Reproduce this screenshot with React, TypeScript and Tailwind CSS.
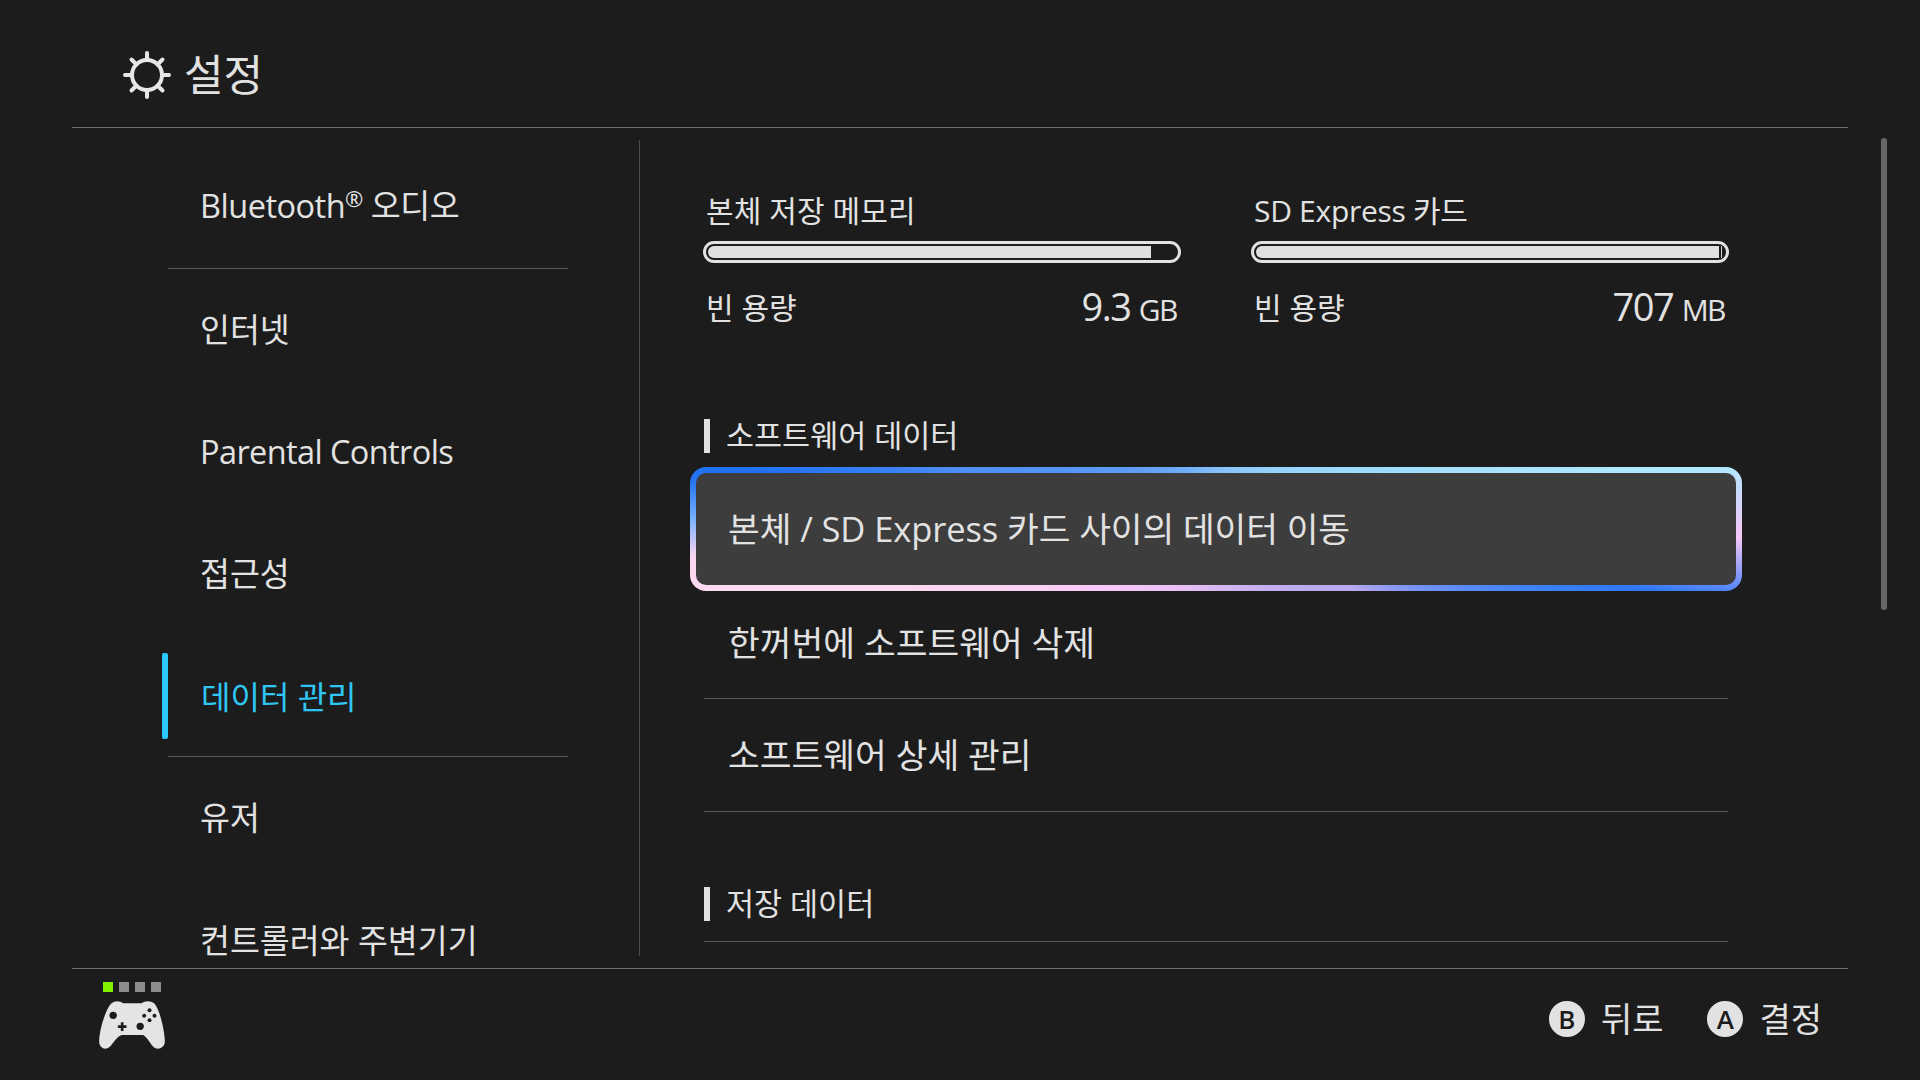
const MENU = [
    { label: "인터넷" },
    { label: "Parental Controls", tight: true },
    { label: "접근성" },
];

function GearIcon() {
    return (
        <svg width="50" height="50" viewBox="0 0 50 50" fill="none" stroke="#e6e6e6" strokeWidth="4" strokeLinecap="round">
            <circle cx="25" cy="25" r="15" />
            <path d="M25 3v7M25 40v7M3 25h7M40 25h7M9.5 9.5l5 5M35.5 35.5l5 5M9.5 40.5l5-5M35.5 14.5l5-5" />
        </svg>
    );
}

function GamepadIcon() {
    return (
        <svg width="66" height="48" viewBox="58 123 197 144">
            <path
                fill="#e4e4e4"
                d="M95 130C105 121 120 122 130 130L185 130C195 122 215 121 225 132C240 150 255 215 255 245C255 262 235 272 222 262C210 250 205 235 190 225L125 225C105 235 100 252 88 262C75 272 58 262 58 245C58 215 75 150 95 130Z"
            />
            <circle cx="100" cy="166" r="11" fill="#1c1c1c" />
            <circle cx="181" cy="199" r="11" fill="#1c1c1c" />
            <path d="M127 187v26M114 200h26" stroke="#1c1c1c" strokeWidth="8" />
            <circle cx="209" cy="151" r="6" fill="#1c1c1c" />
            <circle cx="224" cy="167" r="6" fill="#1c1c1c" />
            <circle cx="209" cy="181" r="6" fill="#1c1c1c" />
            <circle cx="193" cy="167" r="6" fill="#1c1c1c" />
        </svg>
    );
}

function StorageBar({ title, used, value, unit, sliver = false }: { title: string; used: number; value: string; unit: string; sliver?: boolean }) {
    return (
        <div className="w-[478px]">
            <div className={`h-[40px] pl-[3px] pt-[1px] text-[30px] leading-[40px] ${sliver ? "tracking-[-0.3px]" : "tracking-[0.1px]"}`}>{title}</div>
            <div className="mt-[11px] flex h-[22px] gap-[2px] rounded-full border-[3px] border-[#e2e2e2] p-[2px]">
                <div className="h-full rounded-l-full bg-[#e0e0e0]" style={{ width: `${used}%` }} />
                {sliver && <div className="h-full w-[1px] bg-[#cfcfcf]" />}
            </div>
            <div className="mt-[21px] flex items-center justify-between pl-[3px] pr-[4px]">
                <span className="text-[30px] leading-[44px]">빈 용량</span>
                <span className="text-[38px] leading-[44px] tracking-[-1.5px]">
                    {value} <span className="text-[30px] tracking-[-1.5px]">{unit}</span>
                </span>
            </div>
        </div>
    );
}

function SectionTitle({ children }: { children: string }) {
    return (
        <div className="flex h-[34px] items-center border-l-[6px] border-[#e0e0e0] pl-[16px] text-[30.5px]">
            {children}
        </div>
    );
}

export default function App() {
    return (
        <div className="flex h-[1080px] w-[1920px] flex-col overflow-hidden bg-[#1c1c1c] font-['Open_Sans','Noto_Sans_CJK_KR',sans-serif] text-[#e2e2e2]">
            <header className="mx-[72px] flex h-[128px] shrink-0 items-center gap-[12px] border-b border-[#6e6e6e] pl-[50px] pt-[22px]">
                <GearIcon />
                <h1 className="text-[43px] leading-none">설정</h1>
            </header>

            <main className="relative flex h-[840px] shrink-0 overflow-hidden">
                <nav className="ml-[168px] w-[400px] shrink-0 pt-[18px] text-[32.5px]">
                    <div className="flex h-[123px] items-center border-b border-[#5a5a5a] pb-[2px] pl-[32px]">
                        <span className="tracking-[-0.5px]">
                            Bluetooth<sup className="text-[22px]">®</sup> 오디오
                        </span>
                    </div>
                    {MENU.map((item) => (
                        <div key={item.label} className={`flex h-[122px] items-center pl-[32px] ${item.tight ? "tracking-[-0.6px]" : ""}`}>
                            {item.label}
                        </div>
                    ))}
                    <div className="relative flex h-[122px] items-center border-b border-[#5a5a5a] pl-[33px] pt-[2px] text-[32px] text-[#2fc6f4]">
                        <span className="absolute left-[-6px] top-[18px] h-[86px] w-[6px] rounded-[2px] bg-[#2dc8fa]" />
                        데이터 관리
                    </div>
                    <div className="flex h-[122px] items-center pl-[32px] pt-[1px]">유저</div>
                    <div className="flex h-[122px] items-center pl-[32px] pt-[2px]">컨트롤러와 주변기기</div>
                </nav>

                <div className="my-[12px] ml-[71px] w-px shrink-0 bg-[#4c4c4c]" />

                <section className="w-[1103px] shrink-0 pl-[50px] pt-[62px]">
                    <div className="ml-[13px] flex gap-[70px]">
                        <StorageBar title="본체 저장 메모리" used={94.7} value="9.3" unit="GB" />
                        <StorageBar title="SD Express 카드" used={98.9} value="707" unit="MB" sliver />
                    </div>

                    <div className="ml-[14px] mt-[87px]">
                        <SectionTitle>소프트웨어 데이터</SectionTitle>
                    </div>

                    <div className="mt-[14px] h-[124px] w-[1052px] rounded-[16px] bg-[conic-gradient(from_277deg,#2070f5_0deg,#4f90f8_6deg,#85c0fa_83deg,#a0dcfc_156deg,#b0e8ff_166deg,#f5c5f8_174deg,#2f78f5_181deg,#3a80f5_183deg,#b8a8f0_196deg,#f8c8f8_327deg,#fcdcf0_346deg,#fcd5f0_350deg,#7ab4fc_354deg,#2878f5_358deg,#2070f5_360deg)] p-[6px]">
                        <div className="flex h-full items-center rounded-[10px] bg-[#3d3d3d] pl-[32px] text-[34.5px] tracking-[-0.1px]">
                            본체 / SD Express 카드 사이의 데이터 이동
                        </div>
                    </div>

                    <div className="ml-[14px] w-[1024px]">
                        <div className="flex h-[108px] items-center border-b border-[#5a5a5a] pb-[4px] pl-[24px] text-[34.5px]">
                            한꺼번에 소프트웨어 삭제
                        </div>
                        <div className="flex h-[113px] items-center border-b border-[#5a5a5a] pl-[24px] text-[34.5px]">
                            소프트웨어 상세 관리
                        </div>
                        <div className="mt-[75px]">
                            <SectionTitle>저장 데이터</SectionTitle>
                        </div>
                        <div className="mt-[20px] border-b border-[#5a5a5a]" />
                    </div>
                </section>

                <div className="absolute left-[1881px] top-[10px] h-[472px] w-[6px] rounded-full bg-[#666666]" />
            </main>

            <footer className="mx-[72px] flex flex-1 items-start justify-between border-t border-[#6e6e6e] pl-[27px] pr-[26px]">
                <div className="flex flex-col gap-[9px] pt-[13px]">
                    <div className="ml-[4px] flex gap-[6px]">
                        <span className="h-[10px] w-[10px] bg-[#80f000]" />
                        <span className="h-[10px] w-[10px] bg-[#8c8c8c]" />
                        <span className="h-[10px] w-[10px] bg-[#8c8c8c]" />
                        <span className="h-[10px] w-[10px] bg-[#8c8c8c]" />
                    </div>
                    <GamepadIcon />
                </div>
                <div className="flex h-[100px] items-center text-[34px]">
                    <span className="flex h-[36px] w-[36px] items-center justify-center rounded-full bg-[#e2e2e2] text-[26px] font-semibold text-[#1c1c1c]">B</span>
                    <span className="ml-[16px]">뒤로</span>
                    <span className="ml-[44px] flex h-[36px] w-[36px] items-center justify-center rounded-full bg-[#e2e2e2] text-[26px] font-semibold text-[#1c1c1c]">A</span>
                    <span className="ml-[16px]">결정</span>
                </div>
            </footer>
        </div>
    );
}
